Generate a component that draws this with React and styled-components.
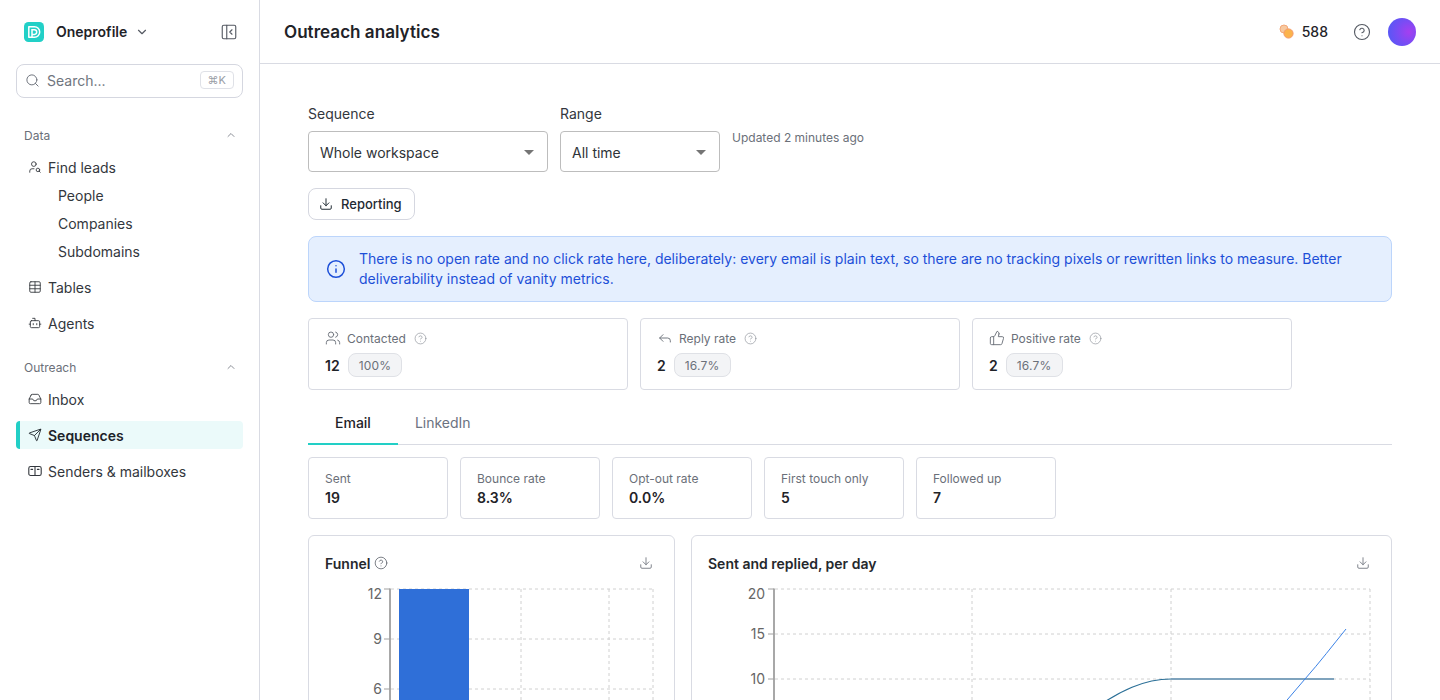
import React from 'react';
import styled, { createGlobalStyle } from 'styled-components';
import {
  ChevronDown,
  ChevronUp,
  PanelLeftClose,
  Search,
  UserSearch,
  Table,
  Bot,
  Inbox,
  Send,
  Download,
  Info,
  Users,
  Reply,
  ThumbsUp,
  CircleHelp,
} from 'lucide-react';

const GlobalStyle = createGlobalStyle`
  html, body {
    margin: 0;
    height: 100%;
    overflow: hidden;
    background: #fff;
  }
  body {
    font-family: Inter, "Liberation Sans", sans-serif;
    color: #1f2328;
  }
  * { box-sizing: border-box; }
`;

const Shell = styled.div`
  display: flex;
  height: 700px;
  overflow: hidden;
`;

const Sidebar = styled.aside`
  width: 260px;
  flex: none;
  border-right: 1px solid #d9dbe3;
  padding: 0 16px;
`;

const Brand = styled.div`
  height: 64px;
  display: flex;
  align-items: center;
  padding: 0 5px 0 8px;
`;

const BrandName = styled.span`
  font-size: 14px;
  font-weight: 600;
  margin: -2px 8px 0 12px;
`;

const CollapseButton = styled.span`
  margin-left: auto;
  display: flex;
  color: #555a63;
`;

const SearchBox = styled.div`
  height: 34px;
  border: 1px solid #d5d7e0;
  border-radius: 8px;
  display: flex;
  align-items: center;
  padding: 0 8px 2px 8px;
  gap: 7px;
  font-size: 14px;
  color: #70757e;
`;

const Kbd = styled.span`
  margin-left: auto;
  height: 18px;
  padding: 0 7px;
  font-size: 11px;
  line-height: 16px;
  color: #9a9ea6;
  border: 1px solid #dfe1e7;
  border-radius: 4px;
`;

const GroupHead = styled.div`
  display: flex;
  align-items: center;
  justify-content: space-between;
  height: 20px;
  padding: 0 6px 0 8px;
  margin-top: ${p => p.$top}px;
  margin-bottom: 8px;
  font-size: 12px;
  color: #6b7079;
`;

const NavList = styled.div`
  display: flex;
  flex-direction: column;
  gap: 8px;
`;

const NavItem = styled.div`
  height: 28px;
  display: flex;
  align-items: center;
  gap: 6px;
  padding-left: 12px;
  font-size: 14px;
  color: #33373d;
  border-radius: 4px;
  ${p =>
    p.$active &&
    `
    background: #ebfafa;
    border-left: 4px solid #22cfc6;
    padding-left: 8px;
    font-weight: 600;
    color: #1d2329;
  `}
`;

const SubList = styled.div`
  display: flex;
  flex-direction: column;
  margin: 1px 0 -1px;
`;

const SubItem = styled.div`
  height: 28px;
  line-height: 28px;
  padding-left: 42px;
  font-size: 14px;
  color: #33373d;
`;

const Main = styled.main`
  flex: 1;
  min-width: 0;
`;

const TopBar = styled.header`
  height: 64px;
  border-bottom: 1px solid #d9dbe3;
  display: flex;
  align-items: center;
  padding: 0 24px;
`;

const PageTitle = styled.h1`
  margin: 0;
  font-size: 17.1px;
  font-weight: 600;
`;

const TopActions = styled.div`
  margin-left: auto;
  display: flex;
  align-items: center;
`;

const Credits = styled.span`
  font-size: 14px;
  font-weight: 500;
  margin: 0 25px 0 7px;
`;

const Avatar = styled.div`
  width: 28px;
  height: 28px;
  border-radius: 50%;
  margin-left: 17px;
  background: radial-gradient(circle at 75% 50%, #a53ff0 0%, #7a4cf4 45%, #4b5cf6 100%);
`;

const Content = styled.div`
  padding: 40px 48px 0;
`;

const FilterRow = styled.div`
  display: flex;
  gap: 12px;
`;

const Field = styled.div`
  width: ${p => p.$width}px;
`;

const FieldLabel = styled.div`
  height: 20px;
  line-height: 20px;
  font-size: 14px;
  margin-bottom: 7px;
  color: #33373d;
`;

const Select = styled.div`
  height: 41px;
  border: 1px solid #bdbdbd;
  border-radius: 4px;
  display: flex;
  align-items: center;
  justify-content: space-between;
  padding: 2px 13px 0 11px;
  font-size: 14px;
  color: #2f3338;
`;

const Caret = styled.span`
  width: 0;
  height: 0;
  border-left: 5px solid transparent;
  border-right: 5px solid transparent;
  border-top: 5px solid #757575;
`;

const Updated = styled.div`
  font-size: 12px;
  color: #6b7079;
  margin-top: 26px;
`;

const ReportButton = styled.div`
  width: 107px;
  height: 32px;
  margin-top: 16px;
  border: 1px solid #d5d7e0;
  border-radius: 8px;
  display: flex;
  align-items: center;
  gap: 8px;
  padding-left: 10px;
  font-size: 13px;
  font-weight: 500;
  color: #1f2a33;
`;

const Alert = styled.div`
  margin-top: 16px;
  min-height: 66px;
  background: #e5effe;
  border: 1px solid #bcd5fb;
  border-radius: 8px;
  display: flex;
  align-items: center;
  gap: 13px;
  padding: 12px 17px;
  font-size: 14px;
  line-height: 20px;
  color: #1d4fd8;
`;

const StatRow = styled.div`
  display: flex;
  gap: 12px;
  margin-top: 16px;
`;

const StatCard = styled.div`
  width: 320px;
  height: 72px;
  border: 1px solid #d9dbe3;
  border-radius: 4px;
  padding: 9px 16px 0;
`;

const StatLabel = styled.div`
  height: 20px;
  display: flex;
  align-items: center;
  gap: 6px;
  font-size: 12px;
  color: #6b7079;
`;

const HelpMark = styled.span`
  display: flex;
  margin: 1px 0 0 2px;
  color: #8b8f97;
`;

const StatValue = styled.div`
  display: flex;
  align-items: center;
  gap: 8px;
  margin-top: 5px;
  font-size: 14px;
  font-weight: 600;
`;

const Badge = styled.span`
  height: 24px;
  line-height: 24px;
  padding: 0 10px;
  background: #f3f4f6;
  border: 1px solid #dfe1e6;
  border-radius: 8px;
  font-size: 12px;
  font-weight: 400;
  letter-spacing: 0.2px;
  color: #6b7079;
`;

const Tabs = styled.div`
  display: flex;
  margin-top: 15px;
  border-bottom: 1px solid #d9dbe3;
`;

const Tab = styled.div`
  height: 40px;
  line-height: 36px;
  padding: 0 ${p => (p.$active ? 27 : 17)}px;
  font-size: 14px;
  font-weight: ${p => (p.$active ? 500 : 400)};
  color: ${p => (p.$active ? '#1f2328' : '#6b7280')};
  border-bottom: 2px solid ${p => (p.$active ? '#22cfc6' : 'transparent')};
  margin-bottom: -1px;
`;

const MetricRow = styled.div`
  display: flex;
  gap: 12px;
  margin-top: 12px;
`;

const MetricCard = styled.div`
  width: 140px;
  height: 62px;
  border: 1px solid #d9dbe3;
  border-radius: 4px;
  padding: 12px 16px 0;
`;

const MetricLabel = styled.div`
  font-size: 12px;
  line-height: 18px;
  color: #6b7079;
`;

const MetricValue = styled.div`
  font-size: 14px;
  line-height: 20px;
  font-weight: 600;
`;

const ChartRow = styled.div`
  display: flex;
  gap: 16px;
  margin-top: 16px;
`;

const ChartCard = styled.section`
  flex: ${p => p.$flex};
  min-width: 0;
  height: 400px;
  border: 1px solid #d9dbe3;
  border-radius: 6px;
  padding: 15px 16px 16px;
`;

const ChartHead = styled.div`
  height: 24px;
  margin-bottom: 5px;
  display: flex;
  align-items: center;
  gap: 4px;
  font-size: 14px;
  font-weight: 600;
  color: #25282d;
`;

const ChartDownload = styled.span`
  margin-left: auto;
  margin-right: 5px;
  display: flex;
  color: #70757e;
`;

const Plot = styled.svg`
  display: block;
`;

const Logo = () => (
  <svg width="20" height="20" viewBox="0 0 20 20">
    <rect width="20" height="20" rx="4.5" fill="#22d0c7" />
    <path d="M4.8 4.8h5.7a4.9 4.9 0 0 1 0 10.4H4.8z" fill="none" stroke="#fff" strokeWidth="1.5" strokeLinejoin="round" />
    <path d="M8 15V7.8h2.4a2.3 2.3 0 0 1 0 4.6H8" fill="none" stroke="#fff" strokeWidth="1.5" />
  </svg>
);

const Coins = () => (
  <svg width="16" height="16" viewBox="0 0 16 16">
    <circle cx="5" cy="5" r="4" fill="#f7c9a0" stroke="#f4a878" />
    <circle cx="9.5" cy="9.5" r="4.6" fill="#fbb34c" stroke="#f59a6a" />
  </svg>
);

const SendersIcon = () => (
  <svg width="14" height="14" viewBox="0 0 14 14" fill="none" stroke="currentColor" strokeWidth="1.1" strokeLinecap="round">
    <rect x="0.8" y="2.5" width="12.4" height="9" rx="1.8" />
    <path d="M7 2.5v9M3 5.4h1.6M9.4 5.4H11" />
  </svg>
);

const GridLine = styled.line`
  stroke: #d0d0d0;
  stroke-width: 1;
  stroke-dasharray: 3 3;
`;

const Tick = styled.line`
  stroke: ${p => (p.$axis ? '#a8a8a8' : '#a0a0a0')};
  stroke-width: ${p => (p.$axis ? 2 : 1)};
`;

const TickLabel = styled.text`
  font-size: 14px;
  fill: #666;
  text-anchor: end;
`;

const labelY = y => (y === 589 ? y + 10 : y + 5);

const FunnelChart = () => (
  <Plot width="333" height="300" viewBox="325 580 333 300">
    {[589, 639, 689].map(y => (
      <GridLine key={y} x1="391" x2="653" y1={y} y2={y} />
    ))}
    {[521, 609, 653].map(x => (
      <GridLine key={x} x1={x} x2={x} y1="589" y2="880" />
    ))}
    <rect x="399" y="589" width="70" height="291" fill="#2f6fd8" />
    <Tick $axis x1="390" x2="390" y1="588.5" y2="880" />
    {[[589, 12], [639, 9], [689, 6]].map(([y, label]) => (
      <g key={label}>
        <Tick x1="384" x2="390" y1={y} y2={y} />
        <TickLabel x="382" y={labelY(y)}>{label}</TickLabel>
      </g>
    ))}
  </Plot>
);

const DailyChart = () => (
  <Plot width="667" height="300" viewBox="708 580 667 300">
    {[589, 634, 679].map(y => (
      <GridLine key={y} x1="775" x2="1370" y1={y} y2={y} />
    ))}
    {[972, 1171, 1370].map(x => (
      <GridLine key={x} x1={x} x2={x} y1="589" y2="880" />
    ))}
    <path d="M1090 712C1120 690 1145 679 1171 679" fill="none" stroke="#2a6f97" strokeWidth="1.2" />
    <path d="M1171 679H1334" fill="none" stroke="#7fa3bd" strokeWidth="2" />
    <path d="M1270 720L1305 679C1320 662 1333 645 1346 629" fill="none" stroke="#3b82e6" strokeWidth="1" />
    <Tick $axis x1="774" x2="774" y1="588.5" y2="880" />
    {[[589, 20], [634, 15], [679, 10]].map(([y, label]) => (
      <g key={label}>
        <Tick x1="768" x2="774" y1={y} y2={y} />
        <TickLabel x="765" y={labelY(y)}>{label}</TickLabel>
      </g>
    ))}
  </Plot>
);

const stats = [
  { icon: Users, label: 'Contacted', value: '12', share: '100%' },
  { icon: Reply, label: 'Reply rate', value: '2', share: '16.7%' },
  { icon: ThumbsUp, label: 'Positive rate', value: '2', share: '16.7%' },
];

const metrics = [
  ['Sent', '19'],
  ['Bounce rate', '8.3%'],
  ['Opt-out rate', '0.0%'],
  ['First touch only', '5'],
  ['Followed up', '7'],
];

const App = () => (
  <Shell>
    <GlobalStyle />
    <Sidebar>
      <Brand>
        <Logo />
        <BrandName>Oneprofile</BrandName>
        <ChevronDown size={14} color="#555a63" />
        <CollapseButton>
          <PanelLeftClose size={18} strokeWidth={1.5} />
        </CollapseButton>
      </Brand>
      <SearchBox>
        <Search size={15} strokeWidth={1.6} />
        Search...
        <Kbd>⌘K</Kbd>
      </SearchBox>

      <GroupHead $top={27}>
        Data
        <ChevronUp size={12} color="#8b8f97" />
      </GroupHead>
      <NavList>
        <div>
          <NavItem>
            <UserSearch size={14} strokeWidth={1.5} />
            Find leads
          </NavItem>
          <SubList>
            <SubItem>People</SubItem>
            <SubItem>Companies</SubItem>
            <SubItem>Subdomains</SubItem>
          </SubList>
        </div>
        <NavItem>
          <Table size={14} strokeWidth={1.5} />
          Tables
        </NavItem>
        <NavItem>
          <Bot size={14} strokeWidth={1.5} />
          Agents
        </NavItem>
      </NavList>

      <GroupHead $top={20}>
        Outreach
        <ChevronUp size={12} color="#8b8f97" />
      </GroupHead>
      <NavList>
        <NavItem>
          <Inbox size={14} strokeWidth={1.5} />
          Inbox
        </NavItem>
        <NavItem $active>
          <Send size={14} strokeWidth={1.5} />
          Sequences
        </NavItem>
        <NavItem>
          <SendersIcon />
          Senders &amp; mailboxes
        </NavItem>
      </NavList>
    </Sidebar>

    <Main>
      <TopBar>
        <PageTitle>Outreach analytics</PageTitle>
        <TopActions>
          <Coins />
          <Credits>588</Credits>
          <CircleHelp size={18} strokeWidth={1.5} color="#555a63" />
          <Avatar />
        </TopActions>
      </TopBar>

      <Content>
        <FilterRow>
          <Field $width={240}>
            <FieldLabel>Sequence</FieldLabel>
            <Select>
              Whole workspace
              <Caret />
            </Select>
          </Field>
          <Field $width={160}>
            <FieldLabel>Range</FieldLabel>
            <Select>
              All time
              <Caret />
            </Select>
          </Field>
          <Updated>Updated 2 minutes ago</Updated>
        </FilterRow>

        <ReportButton>
          <Download size={14} strokeWidth={1.7} />
          Reporting
        </ReportButton>

        <Alert>
          <Info size={20} strokeWidth={1.8} style={{ flex: 'none' }} />
          <div>
            There is no open rate and no click rate here, deliberately: every email is plain text, so there are no
            tracking pixels or rewritten links to measure. Better deliverability instead of vanity metrics.
          </div>
        </Alert>

        <StatRow>
          {stats.map(({ icon: Icon, label, value, share }) => (
            <StatCard key={label}>
              <StatLabel>
                <Icon size={16} strokeWidth={1.4} />
                {label}
                <HelpMark>
                  <CircleHelp size={13} strokeWidth={1.2} />
                </HelpMark>
              </StatLabel>
              <StatValue>
                {value}
                <Badge>{share}</Badge>
              </StatValue>
            </StatCard>
          ))}
        </StatRow>

        <Tabs>
          <Tab $active>Email</Tab>
          <Tab>LinkedIn</Tab>
        </Tabs>

        <MetricRow>
          {metrics.map(([label, value]) => (
            <MetricCard key={label}>
              <MetricLabel>{label}</MetricLabel>
              <MetricValue>{value}</MetricValue>
            </MetricCard>
          ))}
        </MetricRow>

        <ChartRow>
          <ChartCard $flex="0 0 367px">
            <ChartHead>
              Funnel
              <CircleHelp size={14} strokeWidth={1.3} color="#555a63" />
              <ChartDownload>
                <Download size={14} strokeWidth={1.5} />
              </ChartDownload>
            </ChartHead>
            <FunnelChart />
          </ChartCard>
          <ChartCard $flex="1">
            <ChartHead>
              Sent and replied, per day
              <ChartDownload>
                <Download size={14} strokeWidth={1.5} />
              </ChartDownload>
            </ChartHead>
            <DailyChart />
          </ChartCard>
        </ChartRow>
      </Content>
    </Main>
  </Shell>
);

export default App;
